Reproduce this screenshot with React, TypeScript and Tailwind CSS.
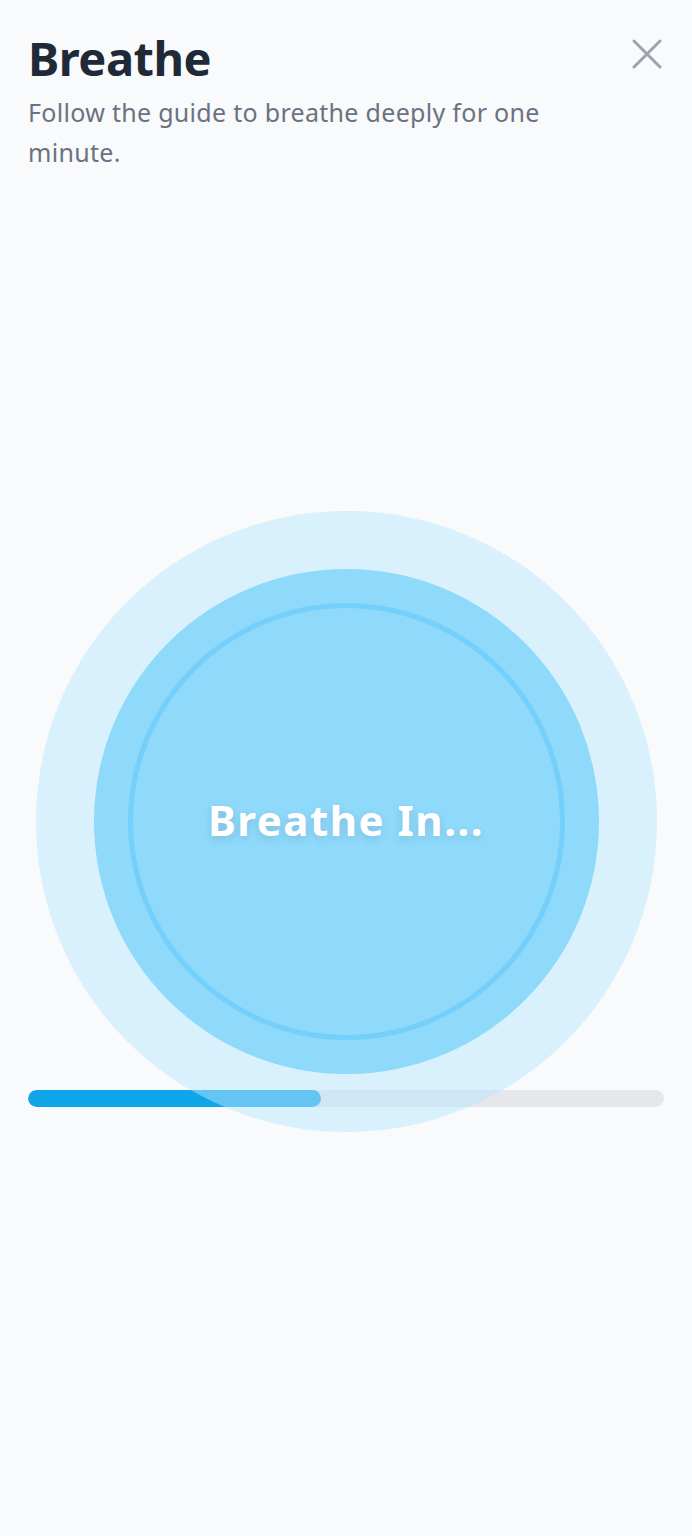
export default function App() {
  const progress = 46; // percent of the minute done

  return (
    <div
      className="min-h-[1536px] w-full bg-[#f8fafc] px-7 pt-[30px]"
      style={{ fontFamily: '"Noto Sans", "Open Sans", sans-serif' }}
    >
      {/* header */}
      <header className="flex items-start justify-between">
        <div>
          <h1 className="text-[47px] font-bold leading-[56px] tracking-[-0.5px] text-[#1f2937]">Breathe</h1>
          <p className="mt-[6px] max-w-[540px] text-[25px] leading-10 tracking-[0.3px] text-[#6b7280]">
            Follow the guide to breathe deeply for one minute.
          </p>
        </div>
        <button className="mt-[9px] mr-[2px] text-[#9ca3af]" aria-label="Close">
          <svg width="30" height="30" viewBox="0 0 30 30" fill="none" stroke="currentColor" strokeWidth="3" strokeLinecap="round">
            <path d="M2 2L28 28M28 2L2 28" />
          </svg>
        </button>
      </header>

      {/* breathing circle */}
      <div className="relative z-10 mt-[397px] flex justify-center">
        <div className="relative flex h-[505px] w-[505px] items-center justify-center">
          <div className="absolute -inset-[58px] rounded-full bg-[#bae6fd]/50" />
          <div className="absolute inset-0 rounded-full bg-[#8fd9fb]" />
          <div className="absolute inset-[34px] rounded-full border-[5px] border-[#74cffb]" />
          <span className="relative -mt-[4px] text-[42px] font-bold tracking-[1.5px] text-white [text-shadow:0_3px_8px_rgba(0,0,0,0.12)]">
            Breathe In...
          </span>
        </div>
      </div>

      {/* progress */}
      <div className="mt-4 h-[17px] w-full overflow-hidden rounded-full bg-[#e5e7eb]">
        <div className="h-full rounded-full bg-[#0ea5e9]" style={{ width: `${progress}%` }} />
      </div>
    </div>
  );
}
